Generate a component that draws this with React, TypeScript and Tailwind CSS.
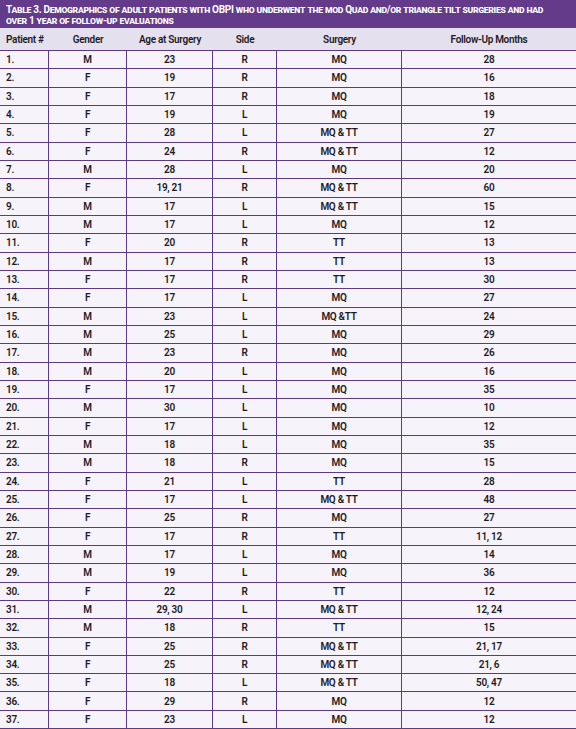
import React from 'react';

type Row = [string, string, string, string, string, string];

const rows: Row[] = [
  ['1.', 'M', '23', 'R', 'MQ', '28'],
  ['2.', 'F', '19', 'R', 'MQ', '16'],
  ['3.', 'F', '17', 'R', 'MQ', '18'],
  ['4.', 'F', '19', 'L', 'MQ', '19'],
  ['5.', 'F', '28', 'L', 'MQ & TT', '27'],
  ['6.', 'F', '24', 'R', 'MQ & TT', '12'],
  ['7.', 'M', '28', 'L', 'MQ', '20'],
  ['8.', 'F', '19, 21', 'R', 'MQ & TT', '60'],
  ['9.', 'M', '17', 'L', 'MQ & TT', '15'],
  ['10.', 'M', '17', 'L', 'MQ', '12'],
  ['11.', 'F', '20', 'R', 'TT', '13'],
  ['12.', 'M', '17', 'R', 'TT', '13'],
  ['13.', 'F', '17', 'R', 'TT', '30'],
  ['14.', 'F', '17', 'L', 'MQ', '27'],
  ['15.', 'M', '23', 'L', 'MQ &TT', '24'],
  ['16.', 'M', '25', 'L', 'MQ', '29'],
  ['17.', 'M', '23', 'R', 'MQ', '26'],
  ['18.', 'M', '20', 'L', 'MQ', '16'],
  ['19.', 'F', '17', 'L', 'MQ', '35'],
  ['20.', 'M', '30', 'L', 'MQ', '10'],
  ['21.', 'F', '17', 'L', 'MQ', '12'],
  ['22.', 'M', '18', 'L', 'MQ', '35'],
  ['23.', 'M', '18', 'R', 'MQ', '15'],
  ['24.', 'F', '21', 'L', 'TT', '28'],
  ['25.', 'F', '17', 'L', 'MQ & TT', '48'],
  ['26.', 'F', '25', 'R', 'MQ', '27'],
  ['27.', 'F', '17', 'R', 'TT', '11, 12'],
  ['28.', 'M', '17', 'L', 'MQ', '14'],
  ['29.', 'M', '19', 'L', 'MQ', '36'],
  ['30.', 'F', '22', 'R', 'TT', '12'],
  ['31.', 'M', '29, 30', 'L', 'MQ & TT', '12, 24'],
  ['32.', 'M', '18', 'R', 'TT', '15'],
  ['33.', 'F', '25', 'R', 'MQ & TT', '21, 17'],
  ['34.', 'F', '25', 'R', 'MQ & TT', '21, 6'],
  ['35.', 'F', '18', 'L', 'MQ & TT', '50, 47'],
  ['36.', 'F', '29', 'R', 'MQ', '12'],
  ['37.', 'F', '23', 'L', 'MQ', '12'],
];

const cols = 'grid grid-cols-[49px_78px_86px_64px_125px_1fr]';

const App: React.FC = () => {
  return (
    <div className="w-[576px] h-[729px] overflow-hidden bg-[#f6f4fa] text-[#1f1a24] font-[Roboto,sans-serif]">
      {/* Title */}
      <div className="bg-[#643b8a] h-[28px] px-[6px] pt-[4px] text-white font-bold text-[10px] leading-[11px] tracking-[-0.3px] whitespace-nowrap [font-variant-caps:small-caps]">
        Table 3. Demographics of adult patients with OBPI who underwent the mod Quad and/or triangle tilt surgeries and had
        <br />
        over 1 year of follow-up evaluations
      </div>

      {/* Header row */}
      <div className={`${cols} h-[23px] bg-[#e4e0ee] border-b border-[#5c3a8a] font-semibold text-[10px] tracking-[-0.3px] whitespace-nowrap items-center`}>
        <div className="pl-[6px]">Patient #</div>
        <div className="text-center">Gender</div>
        <div className="text-center">Age at Surgery</div>
        <div className="text-center">Side</div>
        <div className="text-center">Surgery</div>
        <div className="text-center">Follow-Up Months</div>
      </div>

      {/* Body */}
      {rows.map((r) => (
        <div key={r[0]} className={`${cols} h-[18.33px] border-b border-[#5c3a8a] font-semibold text-[10px] tracking-[-0.3px]`}>
          <div className="pl-[6px] flex items-center border-r border-[#5c3a8a]">{r[0]}</div>
          <div className="flex items-center justify-center border-r border-[#5c3a8a]">{r[1]}</div>
          <div className="flex items-center justify-center border-r border-[#5c3a8a]">{r[2]}</div>
          <div className="flex items-center justify-center border-r border-[#5c3a8a]">{r[3]}</div>
          <div className="flex items-center justify-center border-r border-[#5c3a8a]">{r[4]}</div>
          <div className="flex items-center justify-center">{r[5]}</div>
        </div>
      ))}
    </div>
  );
};

export default App;
